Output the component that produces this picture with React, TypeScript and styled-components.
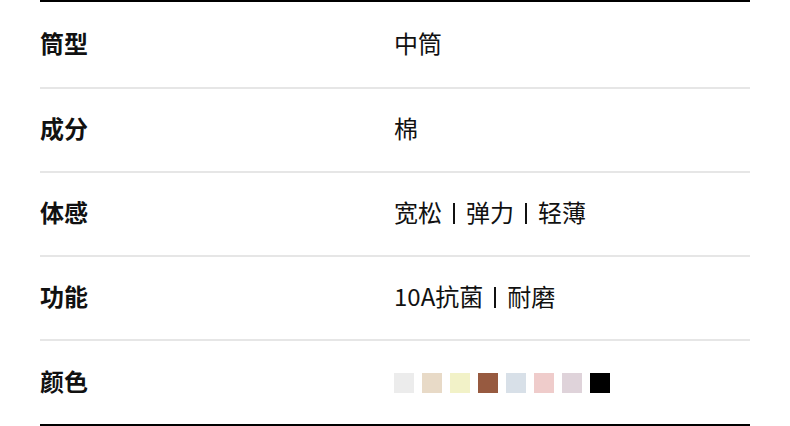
import React from "react";
import styled, { createGlobalStyle } from "styled-components";

const Global = createGlobalStyle`
  html, body { margin: 0; padding: 0; background: #fff; }
  body { font-family: "Noto Sans CJK SC", "Noto Sans", sans-serif; }
`;

const Table = styled.div`
  width: 710px;
  margin-left: 40px;
  border-top: 2px solid #000;
  border-bottom: 2px solid #000;
  display: flex;
  flex-direction: column;
`;

const Row = styled.div<{ $h: number; $last?: boolean }>`
  box-sizing: border-box;
  height: ${(p) => p.$h}px;
  padding-bottom: 4px;
  display: grid;
  grid-template-columns: 354px 1fr;
  align-items: center;
  border-bottom: ${(p) => (p.$last ? "none" : "2px solid #e6e6e6")};
`;

const Label = styled.div`
  font-size: 24px;
  font-weight: 600;
  color: #111;
  line-height: 1;
`;

const Value = styled.div`
  font-size: 24px;
  font-weight: 400;
  color: #111;
  line-height: 1;
  display: flex;
  align-items: center;
`;

const Bar = styled.span`
  display: inline-block;
  width: 2px;
  height: 21px;
  background: #111;
  margin: 3px 11px 0;
`;

const Swatches = styled.div`
  display: flex;
  gap: 8px;
  padding-top: 4px;
`;

const Swatch = styled.div<{ $c: string }>`
  width: 20px;
  height: 20px;
  background: ${(p) => p.$c};
`;

const colors = ["#ececec", "#e8dac7", "#f2f2c8", "#975a40", "#d8e0e8", "#efcccb", "#dfd3da", "#000000"];

const Parts = ({ items }: { items: string[] }) => (
  <Value>
    {items.map((t, i) => (
      <React.Fragment key={i}>
        {i > 0 && <Bar />}
        {t}
      </React.Fragment>
    ))}
  </Value>
);

export default function App() {
  return (
    <>
      <Global />
      <Table>
        <Row $h={87}>
          <Label>筒型</Label>
          <Value>中筒</Value>
        </Row>
        <Row $h={84}>
          <Label>成分</Label>
          <Value>棉</Value>
        </Row>
        <Row $h={84}>
          <Label>体感</Label>
          <Parts items={["宽松", "弹力", "轻薄"]} />
        </Row>
        <Row $h={84}>
          <Label>功能</Label>
          <Parts items={["10A抗菌", "耐磨"]} />
        </Row>
        <Row $h={83} $last>
          <Label>颜色</Label>
          <Swatches>
            {colors.map((c) => (
              <Swatch key={c} $c={c} />
            ))}
          </Swatches>
        </Row>
      </Table>
    </>
  );
}
